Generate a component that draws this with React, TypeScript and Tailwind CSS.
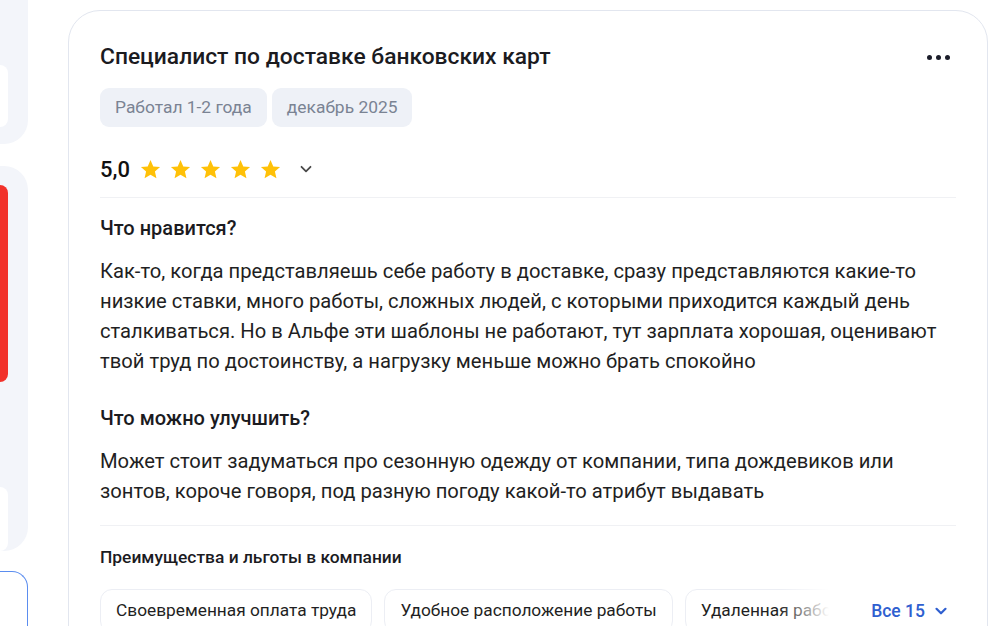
import React from "react";

const Star = () => (
  <svg width="23" height="23" viewBox="0 0 24 24" fill="#ffc107">
    <path d="M12 2.2l2.9 6.6 7.1.6-5.4 4.7 1.6 7-6.2-3.7-6.2 3.7 1.6-7L2 9.4l7.1-.6z" />
  </svg>
);

const Chevron = ({ color, size = 14, sw = 2 }: { color: string; size?: number; sw?: number }) => (
  <svg width={size} height={size} viewBox="0 0 14 14" fill="none">
    <path d="M2.5 4.8L7 9.3l4.5-4.5" stroke={color} strokeWidth={sw} strokeLinecap="round" strokeLinejoin="round" />
  </svg>
);

export default function App() {
  const font = { fontFamily: "Roboto, 'Noto Sans', sans-serif" };
  return (
    <div className="w-[990px] h-[626px] overflow-hidden bg-white flex" style={font}>
      {/* left strip */}
      <div className="w-[28px] shrink-0 flex flex-col">
        <div className="h-[150px] bg-[#f3f5fa] rounded-br-[24px] flex flex-col pt-[65px]">
          <div className="w-[8px] h-[62px] bg-white rounded-r-[12px]" />
        </div>
        <div className="mt-[22px] h-[410px] bg-[#f3f5fa] rounded-r-[24px] flex flex-col pt-[19px]">
          <div className="w-[8px] h-[197px] bg-[#f2312a] rounded-r-[10px]" />
          <div className="mt-[105px] w-[8px] h-[64px] bg-white rounded-r-[12px]" />
        </div>
        <div className="mt-[20px] h-[60px] border-t border-r border-[#5b8def] rounded-tr-[16px]" />
      </div>

      {/* main card */}
      <div className="ml-[40px] mt-[10px] w-[920px] h-[700px] shrink-0 border border-[#e2e6ef] rounded-[32px] px-[31px] pt-[32px]">
        <div className="flex items-center justify-between">
          <h1 className="text-[22.8px] leading-[28px] font-medium text-[#1b1b1f]">
            Специалист по доставке банковских карт
          </h1>
          <div className="flex gap-[4px] mr-[6px]">
            <span className="w-[5px] h-[5px] rounded-full bg-[#1b1d2a]" />
            <span className="w-[5px] h-[5px] rounded-full bg-[#1b1d2a]" />
            <span className="w-[5px] h-[5px] rounded-full bg-[#1b1d2a]" />
          </div>
        </div>

        <div className="mt-[17px] flex gap-[5px]">
          <span className="h-[39px] px-[15px] flex items-center rounded-[9px] bg-[#eef1f7] text-[17.4px] text-[#7a8393]">
            Работал 1-2 года
          </span>
          <span className="h-[39px] px-[15px] flex items-center rounded-[9px] bg-[#eef1f7] text-[17.4px] text-[#7a8393]">
            декабрь 2025
          </span>
        </div>

        <div className="mt-[28px] h-[28px] flex items-center">
          <span className="text-[22px] font-medium text-[#111] mr-[9px]">5,0</span>
          <div className="flex gap-[7px]">
            <Star />
            <Star />
            <Star />
            <Star />
            <Star />
          </div>
          <span className="ml-[17px]">
            <Chevron color="#4a4a4a" size={14} sw={1.8} />
          </span>
        </div>

        <div className="mt-[14px] h-px bg-[#f0f1f4]" />

        <h3 className="mt-[18px] text-[20px] leading-[24px] font-medium text-[#1b1b1f]">Что нравится?</h3>
        <p className="mt-[16px] text-[20.2px] leading-[30px] text-[#1f1f23]">
          Как-то, когда представляешь себе работу в доставке, сразу представляются какие-то низкие ставки, много работы, сложных людей, с которыми приходится каждый день сталкиваться. Но в Альфе эти шаблоны не работают, тут зарплата хорошая, оценивают твой труд по достоинству, а нагрузку меньше можно брать спокойно
        </p>

        <h3 className="mt-[30px] text-[20px] leading-[24px] font-medium text-[#1b1b1f]">Что можно улучшить?</h3>
        <p className="mt-[16px] text-[20.2px] leading-[30px] text-[#1f1f23]">
          Может стоит задуматься про сезонную одежду от компании, типа дождевиков или зонтов, короче говоря, под разную погоду какой-то атрибут выдавать
        </p>

        <div className="mt-[19px] h-px bg-[#f0f1f4]" />

        <h4 className="mt-[21px] text-[17.4px] leading-[20px] font-medium text-[#1b1b1f]">
          Преимущества и льготы в компании
        </h4>

        <div className="mt-[22px] flex items-start">
          <div className="relative flex-1 min-w-0 overflow-hidden">
            <div className="flex gap-[12px]">
              {["Своевременная оплата труда", "Удобное расположение работы", "Удаленная работа", "Обучение"].map((t) => (
                <span
                  key={t}
                  className="shrink-0 h-[44px] px-[15px] flex items-center rounded-[12px] border border-[#eceef4] text-[17.3px] text-[#1f1f23] bg-white"
                >
                  {t}
                </span>
              ))}
            </div>
            <div className="absolute right-0 top-0 h-full w-[50px] bg-gradient-to-r from-transparent to-white" />
          </div>
          <button className="shrink-0 ml-[42px] mr-[8px] h-[44px] flex items-center gap-[9px] text-[17.5px] font-medium text-[#2f5fd0]">
            Все 15
            <Chevron color="#2f5fd0" size={14} sw={2.2} />
          </button>
        </div>
      </div>
    </div>
  );
}
